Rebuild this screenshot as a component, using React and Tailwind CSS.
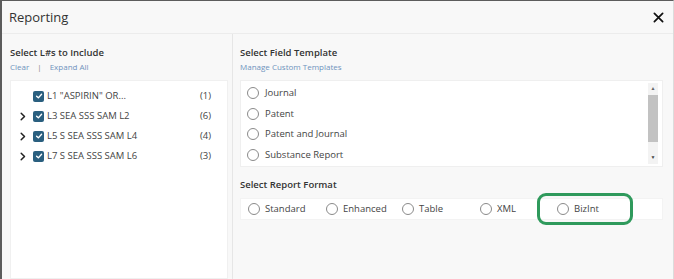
import React from 'react'

const font = { fontFamily: '"Open Sans", "Noto Sans", sans-serif' }

const queries = [
  { id: 'L1', label: 'L1 "ASPIRIN" OR...', count: '(1)', expandable: false },
  { id: 'L3', label: 'L3 SEA SSS SAM L2', count: '(6)', expandable: true },
  { id: 'L5', label: 'L5 S SEA SSS SAM L4', count: '(4)', expandable: true },
  { id: 'L7', label: 'L7 S SEA SSS SAM L6', count: '(3)', expandable: true },
]

const templates = ['Journal', 'Patent', 'Patent and Journal', 'Substance Report']

const formats = [
  { name: 'Standard', w: 'w-[78px]' },
  { name: 'Enhanced', w: 'w-[76px]' },
  { name: 'Table', w: 'w-[78px]' },
  { name: 'XML', w: 'w-[77px]' },
  { name: 'BizInt', w: 'w-[60px]' },
]

const Radio = () => (
  <span className="w-[12px] h-[12px] rounded-full border border-[#8a8a8a] bg-white shrink-0" />
)

const Check = () => (
  <span className="w-[11px] h-[11px] rounded-[2px] bg-[#2a5f7f] flex items-center justify-center shrink-0">
    <svg width="8" height="8" viewBox="0 0 10 10" fill="none">
      <path d="M2 5.2 L4.2 7.3 L8.2 2.8" stroke="white" strokeWidth="1.7" strokeLinecap="round" strokeLinejoin="round" />
    </svg>
  </span>
)

const Chevron = () => (
  <svg width="6" height="9" viewBox="0 0 6 9" fill="none">
    <path d="M1.2 1.2 L4.5 4.5 L1.2 7.8" stroke="#222" strokeWidth="1.5" strokeLinecap="round" strokeLinejoin="round" />
  </svg>
)

const App = () => {
  return (
    <div style={font} className="w-[674px] h-[279px] bg-[#f8f8f8] border-t border-l-2 border-r border-t-[#5c5c5c] border-l-[#5c5c5c] border-r-[#dcdcdc] flex flex-col overflow-hidden text-[#3a3a3a]">
      {/* header */}
      <div className="h-[33px] shrink-0 flex items-center justify-between pl-[7px] pr-[9px] border-b border-[#ececec]">
        <h2 className="text-[13px] text-[#333] leading-none">Reporting</h2>
        <svg width="11" height="11" viewBox="0 0 12 12" fill="none">
          <path d="M1.5 1.5 L10.5 10.5 M10.5 1.5 L1.5 10.5" stroke="#111" strokeWidth="1.9" strokeLinecap="round" />
        </svg>
      </div>

      <div className="flex flex-1 min-h-0">
        {/* left: L#s */}
        <div className="w-[230px] shrink-0 pl-[8px] pr-[4px] pt-[12px] flex flex-col">
          <div className="text-[9.5px] font-semibold text-[#333] leading-[14px]">Select L#s to Include</div>
          <div className="flex items-center text-[8px] text-[#6f93bd] leading-[12px] mt-[1px]">
            <span>Clear</span>
            <span className="mx-[8px] text-[#888]">|</span>
            <span>Expand All</span>
          </div>
          <div className="flex-1 bg-white border border-[#f0f0f0] mt-[7px] pt-[5px] pl-[9px] pr-[16px]">
            {queries.map((q) => (
              <div key={q.id} className="flex items-center h-[20px]">
                <span className="w-[13px] flex items-center">{q.expandable && <Chevron />}</span>
                <Check />
                <span className="ml-[3px] text-[9.5px] text-[#444] flex-1">{q.label}</span>
                <span className="text-[9.5px] text-[#444]">{q.count}</span>
              </div>
            ))}
          </div>
        </div>

        {/* right */}
        <div className="flex-1 border-l border-[#e6e6e6] pl-[7px] pr-[10px] pt-[12px] flex flex-col">
          <div className="text-[9.5px] font-semibold text-[#333] leading-[14px]">Select Field Template</div>
          <div className="text-[8px] text-[#6f93bd] leading-[12px] mt-[1px]">Manage Custom Templates</div>
          <div className="h-[87px] bg-white border border-[#efefef] mt-[7px] flex">
            <div className="flex-1 pt-[2px] pl-[6px]">
              {templates.map((t) => (
                <div key={t} className="flex items-center h-[20.5px] gap-[6px]">
                  <Radio />
                  <span className="text-[9.5px] text-[#444]">{t}</span>
                </div>
              ))}
            </div>
            <div className="w-[10px] mr-[4px] my-[2px] bg-[#f3f3f3] flex flex-col items-center">
              <span className="h-[12px] flex items-center text-[5px] text-[#666]">▲</span>
              <span className="w-full h-[47px] bg-[#c2c2c2]" />
              <span className="flex-1" />
              <span className="h-[12px] flex items-center text-[5px] text-[#444]">▼</span>
            </div>
          </div>

          <div className="text-[9.5px] font-semibold text-[#333] leading-[14px] mt-[11px]">Select Report Format</div>
          <div className="relative h-[22px] bg-white border border-[#f3f3f3] mt-[6px] flex items-center pl-[7px]">
            {formats.map((f) => (
              <div key={f.name} className={`flex items-center gap-[5px] ${f.w} shrink-0`}>
                <Radio />
                <span className="text-[9.5px] text-[#444]">{f.name}</span>
              </div>
            ))}
            <div className="absolute left-[296px] top-[-6px] w-[96px] h-[32px] rounded-[9px] border-[3px] border-[#2f9a5c]" />
          </div>
        </div>
      </div>
    </div>
  )
}

export default App
